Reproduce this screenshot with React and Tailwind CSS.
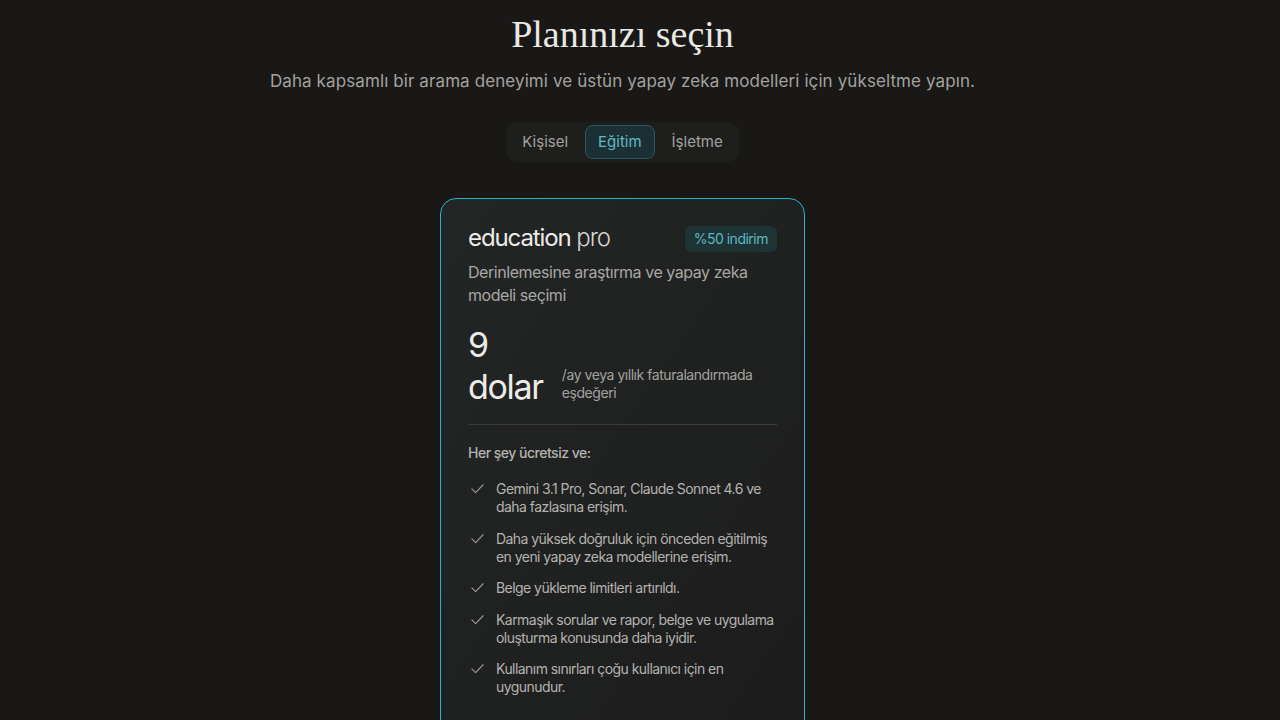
import React from 'react';

const features = [
  'Gemini 3.1 Pro, Sonar, Claude Sonnet 4.6 ve daha fazlasına erişim.',
  'Daha yüksek doğruluk için önceden eğitilmiş en yeni yapay zeka modellerine erişim.',
  'Belge yükleme limitleri artırıldı.',
  'Karmaşık sorular ve rapor, belge ve uygulama oluşturma konusunda daha iyidir.',
  'Kullanım sınırları çoğu kullanıcı için en uygunudur.',
];

const Check = () => (
  <svg width="15" height="15" viewBox="0 0 24 24" fill="none" stroke="currentColor" strokeWidth="1.8" strokeLinecap="round" strokeLinejoin="round" className="mt-[1px] shrink-0 text-[#9a9a96]">
    <path d="M3 12.5l6 6L21 6" />
  </svg>
);

export default function App() {
  return (
    <div className="h-[720px] overflow-hidden bg-[#191817] pr-[35px] font-['Inter',sans-serif]">
      <div className="flex flex-col items-center pt-[12px]">
        <h1 className="font-['Liberation_Serif',serif] text-[38px] leading-[44px] text-[#e9e8e4]">Planınızı seçin</h1>
        <p className="mt-[13px] text-[17px] leading-[24px] tracking-[0.1px] text-[#a3a29e]">
          Daha kapsamlı bir arama deneyimi ve üstün yapay zeka modelleri için yükseltme yapın.
        </p>

        <div className="mt-[29px] flex items-center gap-[4px] rounded-xl bg-[#1e1e1d] p-[3px]">
          <button className="h-[34px] px-[13px] text-[15px] text-[#a3a29e]">Kişisel</button>
          <button className="h-[34px] rounded-lg border border-[#2c5a60] bg-[#1b3034] px-[12px] text-[15px] text-[#64b9c3]">Eğitim</button>
          <button className="h-[34px] px-[13px] text-[15px] text-[#a3a29e]">İşletme</button>
        </div>

        <div className="mt-[36px] w-[365px] shrink-0 rounded-2xl border border-[#22b6ca] bg-gradient-to-br from-[#232626] to-[#1c1c1c] px-[27px] pt-[24px] pb-[40px]">
          <div className="flex items-center justify-between">
            <div className="text-[24px] leading-[30px] tracking-[-1.1px] text-[#ecebe7]">
              education <span className="font-light text-[#d6d5d1]">pro</span>
            </div>
            <span className="mt-[2px] rounded-md bg-[#1e3336] px-[9px] py-[4px] text-[14px] leading-[18px] tracking-[-0.5px] text-[#5fb7c1]">%50 indirim</span>
          </div>
          <p className="mt-[8px] text-[16px] leading-[23px] tracking-[-0.45px] text-[#a8a7a3]">
            Derinlemesine araştırma ve yapay zeka modeli seçimi
          </p>

          <div className="mt-[17px] flex items-end gap-[19px]">
            <div className="text-[34px] leading-[42px] tracking-[-1.3px] text-[#ecebe7]">
              9<br />dolar
            </div>
            <div className="pb-[6px] text-[14px] leading-[18px] tracking-[-0.45px] text-[#a3a29e]">
              /ay veya yıllık faturalandırmada eşdeğeri
            </div>
          </div>

          <div className="mt-[16px] h-px bg-[#3a3a39]" />

          <div className="mt-[19px] text-[14px] font-medium leading-[18px] tracking-[-0.5px] text-[#b4b3af]">Her şey ücretsiz ve:</div>

          <ul className="mt-[18px] flex flex-col gap-[13.5px] pl-[2px]">
            {features.map((f) => (
              <li key={f} className="flex items-start gap-[11px] text-[14px] leading-[18px] tracking-[-0.55px] text-[#b4b3af]">
                <Check />
                <span>{f}</span>
              </li>
            ))}
          </ul>
        </div>
      </div>
    </div>
  );
}
